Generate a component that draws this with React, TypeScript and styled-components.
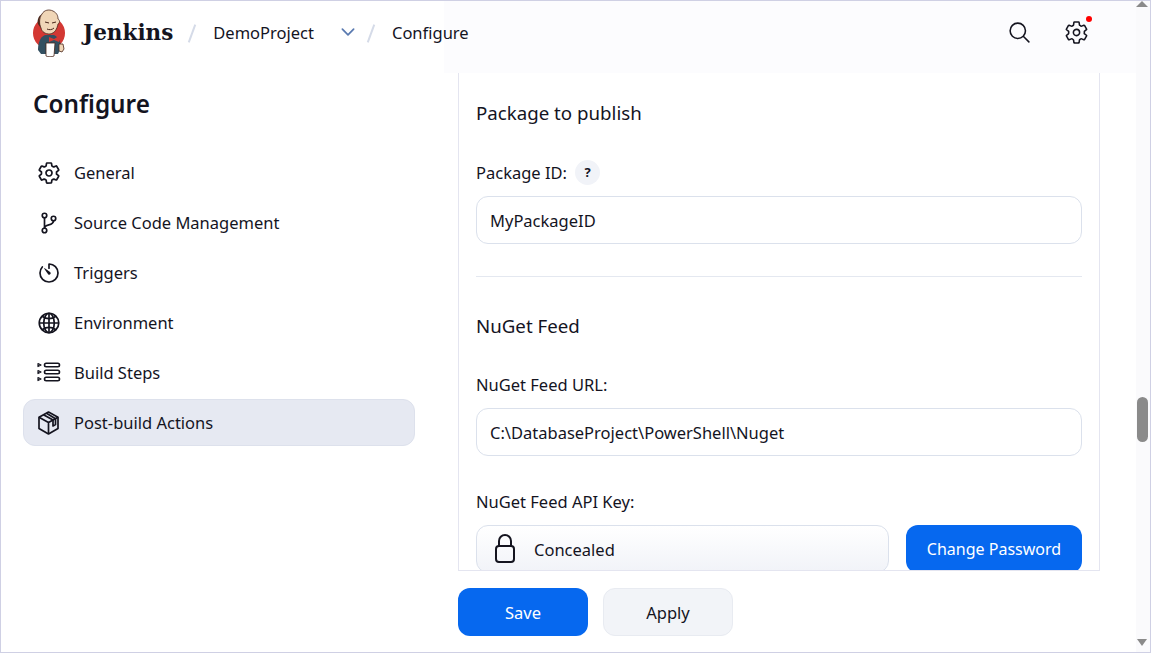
import React from 'react';
import styled, { createGlobalStyle } from 'styled-components';
import {
  IoSettingsOutline,
  IoGitBranchOutline,
  IoTimerOutline,
  IoGlobeOutline,
  IoSearchOutline,
  IoChevronDown,
} from 'react-icons/io5';

const GlobalStyle = createGlobalStyle`
  html, body {
    margin: 0;
    height: 100%;
    overflow: hidden;
    background: #fff;
    color: #14141f;
    font-family: "Noto Sans", "Open Sans", sans-serif;
    font-size: 16.5px;
  }
  * { box-sizing: border-box; }
`;

const JenkinsLogo = () => (
  <svg width="36" height="48" viewBox="0 0 36 48">
    <circle cx="17" cy="24" r="16" fill="#d33833" />
    <path d="M6 41c0-7 2-13 7-15h9c5 2 7 8 7 13l-3 6H9z" fill="#335061" />
    <path d="M10 5c2-4 7-5 11-3 4 2 5 5 5 8 2 1 2 4 0 5-1 5-3 9-8 10-5 0-8-2-9-6-2-4-2-10 1-14z" fill="#f0d6b7" stroke="#49261a" strokeWidth=".8" />
    <path d="M10 5c-3 3-3 9-1 14l-3-4c-1-3 0-8 4-10z" fill="#49261a" />
    <path d="M13 13l4 1M20 14l4-1M15 20c2 1 5 1 7-1" fill="none" stroke="#49261a" strokeWidth="1" />
    <path d="M17 28l5 2 5-3v6l-5-2-5 2z" fill="#d33833" />
    <path d="M14 34h9l-1 13c-2 1-6 1-8 0z" fill="#fff" stroke="#49261a" strokeWidth=".8" />
    <path d="M27 35h4l1 5-2 3-3-1z" fill="#f0d6b7" stroke="#49261a" strokeWidth=".8" />
  </svg>
);

const StepsIcon = () => (
  <svg width="24" height="24" viewBox="0 0 24 24" fill="none" stroke="currentColor" strokeWidth="1.6">
    <rect x="7.500" y="2.300" width="15" height="3.400" rx="1.700" />
    <rect x="7.500" y="9.300" width="15" height="3.400" rx="1.700" />
    <rect x="7.500" y="16.300" width="15" height="3.400" rx="1.700" />
    <path d="M1 2.500l3 1.500-3 1.500zM1 9.500l3 1.500-3 1.500zM1 16.500l3 1.500-3 1.500z" strokeWidth="1.200" strokeLinejoin="round" />
  </svg>
);

const PackageIcon = () => (
  <svg width="24" height="24" viewBox="0 0 24 24" fill="none" stroke="currentColor" strokeWidth="1.700" strokeLinejoin="round">
    <path d="M11.500 1l9.500 5.200v11.300L11.500 23 2 17.500V6.200z" />
    <path d="M2 6.200l9.500 5.300L21 6.200M11.500 11.500V23" />
    <path d="M6.500 3.700l9.500 5.300v6l2.500-1.400V7.700L9.500 2.300" />
  </svg>
);

const LockIcon = () => (
  <svg width="22" height="30" viewBox="0 0 22 30" fill="none" stroke="currentColor" strokeWidth="2">
    <rect x="2" y="12" width="18" height="16" rx="3" />
    <path d="M5 12V7a6 6 0 0 1 12 0v5" />
  </svg>
);

const navItems = [
  { label: 'General', icon: <IoSettingsOutline /> },
  { label: 'Source Code Management', icon: <IoGitBranchOutline /> },
  { label: 'Triggers', icon: <IoTimerOutline /> },
  { label: 'Environment', icon: <IoGlobeOutline /> },
  { label: 'Build Steps', icon: <StepsIcon /> },
  { label: 'Post-build Actions', icon: <PackageIcon />, active: true },
];

const App: React.FC = () => {
  return (
    <Frame>
      <GlobalStyle />
      <Page>
        <Header>
          <Brand>
            <JenkinsLogo />
            <BrandName>Jenkins</BrandName>
          </Brand>
          <Slash />
          <Crumb>DemoProject</Crumb>
          <CrumbChevron>
            <IoChevronDown />
          </CrumbChevron>
          <Slash />
          <Crumb>Configure</Crumb>
          <HeaderActions>
            <HeaderIcon>
              <IoSearchOutline />
            </HeaderIcon>
            <HeaderIcon>
              <IoSettingsOutline />
              <RedDot />
            </HeaderIcon>
          </HeaderActions>
        </Header>
        <Body>
          <Sidebar>
            <SideTitle>Configure</SideTitle>
            <NavList>
              {navItems.map((item) => (
                <NavItem key={item.label} $active={item.active}>
                  <NavIcon>{item.icon}</NavIcon>
                  {item.label}
                </NavItem>
              ))}
            </NavList>
          </Sidebar>
          <Main>
            <Panel>
              <SectionTitle>Package to publish</SectionTitle>
              <LabelRow>
                Package ID:
                <HelpBadge>?</HelpBadge>
              </LabelRow>
              <Field>MyPackageID</Field>
              <Divider />
              <SectionTitle $after>NuGet Feed</SectionTitle>
              <LabelRow>NuGet Feed URL:</LabelRow>
              <Field>C:\DatabaseProject\PowerShell\Nuget</Field>
              <LabelRow>NuGet Feed API Key:</LabelRow>
              <SecretRow>
                <SecretField>
                  <LockIcon />
                  Concealed
                </SecretField>
                <PrimaryButton $width={176} $small>
                  Change Password
                </PrimaryButton>
              </SecretRow>
            </Panel>
            <Actions>
              <PrimaryButton $width={130}>Save</PrimaryButton>
              <SecondaryButton>Apply</SecondaryButton>
            </Actions>
          </Main>
        </Body>
      </Page>
      <ScrollTrack>
        <ArrowUp />
        <ScrollThumb />
        <ArrowDown />
      </ScrollTrack>
    </Frame>
  );
};

const Frame = styled.div`
  display: grid;
  grid-template-columns: 1fr 14px;
  height: 100vh;
  border: 1px solid #cfd0e4;
  overflow: hidden;
`;

const Page = styled.div`
  display: flex;
  flex-direction: column;
  min-width: 0;
`;

const Header = styled.header`
  display: flex;
  align-items: center;
  height: 72px;
  padding: 0 31px 10px;
  background: linear-gradient(90deg, #fff 39%, #fcfcfe 39%);
`;

const Brand = styled.div`
  display: flex;
  align-items: center;
  gap: 15px;
  svg {
    margin-top: 2px;
  }
`;

const BrandName = styled.span`
  font-family: "DejaVu Serif", serif;
  font-size: 21.500px;
  font-weight: 700;
  color: #14141f;
`;

const Slash = styled.span`
  width: 2px;
  height: 19px;
  margin: 3px 20px 0 18px;
  background: #d5dbe8;
  transform: rotate(20deg);
`;

const Crumb = styled.span`
  color: #14141f;
`;

const CrumbChevron = styled.span`
  display: flex;
  margin: 0 -6px 0 24px;
  font-size: 20px;
  color: #5a7ab0;
  svg * {
    stroke-width: 44;
  }
`;

const HeaderActions = styled.div`
  display: flex;
  gap: 32px;
  margin-left: auto;
  margin-right: 16px;
`;

const HeaderIcon = styled.span`
  position: relative;
  display: flex;
  font-size: 25px;
  color: #14141f;
`;

const RedDot = styled.span`
  position: absolute;
  top: -4px;
  right: -3px;
  width: 6px;
  height: 6px;
  border-radius: 50%;
  background: #f00;
`;

const Body = styled.div`
  display: flex;
  flex: 1;
  min-height: 0;
`;

const Sidebar = styled.aside`
  width: 457px;
  padding: 12px 0 0 22px;
`;

const SideTitle = styled.h1`
  margin: 0 0 26px 10px;
  font-size: 24.300px;
  line-height: 38px;
  font-weight: 600;
  color: #14141f;
`;

const NavList = styled.nav`
  display: flex;
  flex-direction: column;
  gap: 3px;
  width: 392px;
`;

const NavItem = styled.a<{ $active?: boolean }>`
  display: flex;
  align-items: center;
  height: 47px;
  padding-left: 13px;
  border: 1px solid ${(p) => (p.$active ? '#dde1ec' : 'transparent')};
  border-radius: 12px;
  background: ${(p) => (p.$active ? '#e6e9f2' : 'transparent')};
  color: #14141f;
`;

const NavIcon = styled.span`
  display: flex;
  width: 37px;
  font-size: 24px;
  svg[viewBox='0 0 512 512'] [fill='none'] {
    stroke-width: 36;
  }
`;

const Main = styled.main`
  display: flex;
  flex-direction: column;
  width: 642px;
`;

const Panel = styled.section`
  height: 498px;
  padding: 0 17px;
  overflow: hidden;
  background: #fff;
  border: 1px solid #e4e5f0;
  border-top: 0;
`;

const SectionTitle = styled.h2<{ $after?: boolean }>`
  margin: ${(p) => (p.$after ? '35px 0 -1px' : '26px 0 0')};
  font-size: 18.700px;
  line-height: 28px;
  font-weight: 400;
  color: #14141f;
`;

const LabelRow = styled.div`
  display: flex;
  align-items: center;
  gap: 8px;
  height: 28px;
  margin-top: 31px;
  margin-bottom: 10px;
`;

const HelpBadge = styled.span`
  display: flex;
  align-items: center;
  justify-content: center;
  width: 25px;
  height: 25px;
  border-radius: 50%;
  background: #f1f3f8;
  font-size: 13px;
  font-weight: 700;
`;

const Field = styled.div`
  display: flex;
  align-items: center;
  height: 48px;
  padding: 0 13px;
  border: 1px solid #dbe1ec;
  border-radius: 12px;
  background: #fff;
`;

const Divider = styled.hr`
  margin: 32px 0 0;
  border: 0;
  border-top: 1px solid #e4e8f0;
`;

const SecretRow = styled.div`
  display: flex;
  gap: 17px;
`;

const SecretField = styled(Field)`
  flex: 1;
  gap: 18px;
  padding-left: 17px;
  background: linear-gradient(180deg, #fff, #f1f3f8);
`;

const PrimaryButton = styled.button<{ $width: number; $small?: boolean }>`
  width: ${(p) => p.$width}px;
  height: 48px;
  border: 0;
  border-radius: 12px;
  background: #0668ef;
  color: #fff;
  font-family: inherit;
  font-size: ${(p) => (p.$small ? '16px' : '16.500px')};
`;

const SecondaryButton = styled.button`
  width: 130px;
  height: 48px;
  border: 1px solid #e8ebf1;
  border-radius: 12px;
  background: #f2f4f8;
  color: #14141f;
  font-family: inherit;
  font-size: 16.500px;
`;

const Actions = styled.div`
  display: flex;
  gap: 15px;
  margin-top: 17px;
`;

const ScrollTrack = styled.div`
  position: relative;
  background: #fafafc;
`;

const ScrollThumb = styled.div`
  position: absolute;
  top: 396px;
  left: 1px;
  width: 11px;
  height: 45px;
  border-radius: 6px;
  background: #8a8a8a;
`;

const ArrowUp = styled.div`
  position: absolute;
  top: 0;
  left: 0;
  width: 0;
  height: 0;
  border-left: 6px solid transparent;
  border-right: 6px solid transparent;
  border-bottom: 6px solid #8a8a8a;
`;

const ArrowDown = styled.div`
  position: absolute;
  bottom: 6px;
  left: 1px;
  width: 0;
  height: 0;
  border-left: 5.500px solid transparent;
  border-right: 5.500px solid transparent;
  border-top: 7px solid #8a8a8a;
`;

export default App;
